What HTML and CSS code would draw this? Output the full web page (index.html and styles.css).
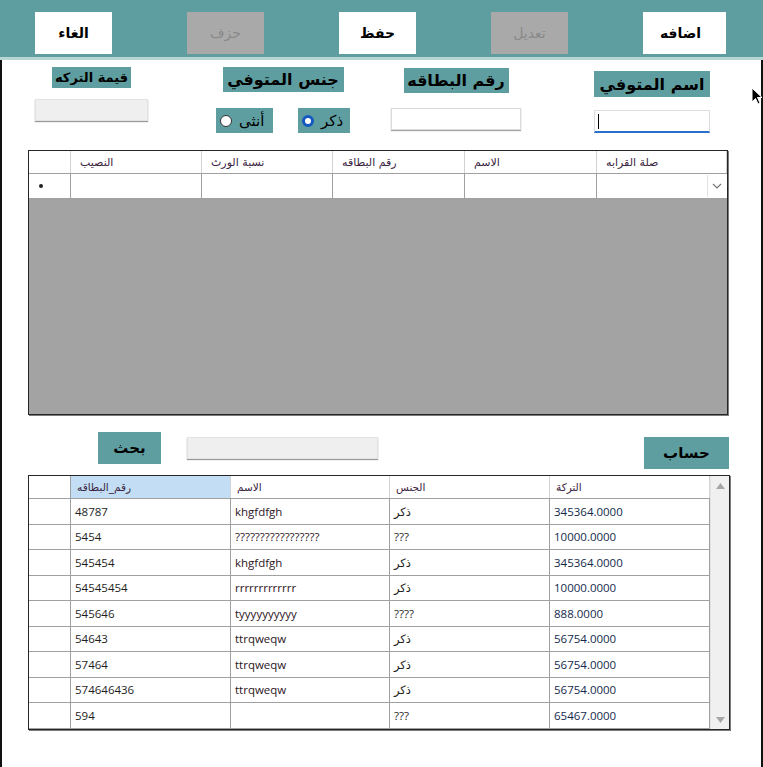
FILE: index.html
```html
<!DOCTYPE html>
<html lang="ar">
<head>
<meta charset="utf-8">
<title>التركة</title>
<link rel="stylesheet" href="styles.css">
</head>
<body>
<div class="window">
  <header class="toolbar">
    <button class="tb-btn">الغاء</button>
    <button class="tb-btn disabled">حزف</button>
    <button class="tb-btn">حفظ</button>
    <button class="tb-btn disabled">تعديل</button>
    <button class="tb-btn wide">اضافه</button>
  </header>

  <main class="content">
    <section class="form">
      <div class="field f-sum">
        <div class="lbl lbl-small">قيمة التركه</div>
        <div class="box box-grey"></div>
      </div>
      <div class="field f-gender">
        <div class="lbl lbl-gender">جنس المتوفي</div>
        <div class="radios">
          <div class="radio r-female"><span class="dot"></span><span>أنثى</span></div>
          <div class="radio r-male"><span class="dot checked"></span><span>ذكر</span></div>
        </div>
      </div>
      <div class="field f-card">
        <div class="lbl lbl-card">رقم البطاقه</div>
        <div class="box box-white"></div>
      </div>
      <div class="field f-name">
        <div class="lbl lbl-name">اسم المتوفي</div>
        <div class="box box-focus"><span class="caret"></span></div>
      </div>
    </section>

    <section class="ugrid">
      <div class="ug-row ug-head">
        <div class="ug-cell"></div>
        <div class="ug-cell">النصيب</div>
        <div class="ug-cell">نسبة الورث</div>
        <div class="ug-cell">رقم البطاقه</div>
        <div class="ug-cell">الاسم</div>
        <div class="ug-cell">صلة القرابه</div>
      </div>
      <div class="ug-row ug-new">
        <div class="ug-cell ug-rh"><span class="star"></span></div>
        <div class="ug-cell"></div>
        <div class="ug-cell"></div>
        <div class="ug-cell"></div>
        <div class="ug-cell"></div>
        <div class="ug-cell ug-combo">
          <span class="combo-btn">
            <svg width="10" height="6" viewBox="0 0 10 6"><polyline points="1,1 5,5 9,1" fill="none" stroke="#777" stroke-width="1.2"/></svg>
          </span>
        </div>
      </div>
    </section>

    <section class="search-row">
      <button class="teal-btn btn-search">بحث</button>
      <div class="box box-grey search-box"></div>
      <button class="teal-btn btn-calc">حساب</button>
    </section>

    <section class="lgrid">
      <div class="lg-table">
        <div class="lg-row lg-head">
          <div class="lg-cell lg-rh"></div>
          <div class="lg-cell sel">رقم_البطاقه</div>
          <div class="lg-cell">الاسم</div>
          <div class="lg-cell">الجنس</div>
          <div class="lg-cell">التركة</div>
        </div>
        <div class="lg-row"><div class="lg-cell lg-rh"></div><div class="lg-cell">48787</div><div class="lg-cell nm">khgfdfgh</div><div class="lg-cell">ذكر</div><div class="lg-cell num">345364.0000</div></div>
        <div class="lg-row"><div class="lg-cell lg-rh"></div><div class="lg-cell">5454</div><div class="lg-cell nm">?????????????????</div><div class="lg-cell">???</div><div class="lg-cell num">10000.0000</div></div>
        <div class="lg-row"><div class="lg-cell lg-rh"></div><div class="lg-cell">545454</div><div class="lg-cell nm">khgfdfgh</div><div class="lg-cell">ذكر</div><div class="lg-cell num">345364.0000</div></div>
        <div class="lg-row"><div class="lg-cell lg-rh"></div><div class="lg-cell">54545454</div><div class="lg-cell nm">rrrrrrrrrrrrr</div><div class="lg-cell">ذكر</div><div class="lg-cell num">10000.0000</div></div>
        <div class="lg-row"><div class="lg-cell lg-rh"></div><div class="lg-cell">545646</div><div class="lg-cell nm">tyyyyyyyyyy</div><div class="lg-cell">????</div><div class="lg-cell num">888.0000</div></div>
        <div class="lg-row"><div class="lg-cell lg-rh"></div><div class="lg-cell">54643</div><div class="lg-cell nm">ttrqweqw</div><div class="lg-cell">ذكر</div><div class="lg-cell num">56754.0000</div></div>
        <div class="lg-row"><div class="lg-cell lg-rh"></div><div class="lg-cell">57464</div><div class="lg-cell nm">ttrqweqw</div><div class="lg-cell">ذكر</div><div class="lg-cell num">56754.0000</div></div>
        <div class="lg-row"><div class="lg-cell lg-rh"></div><div class="lg-cell">574646436</div><div class="lg-cell nm">ttrqweqw</div><div class="lg-cell">ذكر</div><div class="lg-cell num">56754.0000</div></div>
        <div class="lg-row"><div class="lg-cell lg-rh"></div><div class="lg-cell">594</div><div class="lg-cell nm"></div><div class="lg-cell">???</div><div class="lg-cell num">65467.0000</div></div>
      </div>
      <div class="vscroll">
        <svg class="arr" width="9" height="6" viewBox="0 0 9 6"><polygon points="0,6 4.5,0 9,6" fill="#a6a6a6"/></svg>
        <svg class="arr" width="9" height="6" viewBox="0 0 9 6"><polygon points="0,0 4.5,6 9,0" fill="#a6a6a6"/></svg>
      </div>
    </section>
  </main>

  <svg class="mouse" width="12" height="18" viewBox="0 0 12 18">
    <polygon points="1,1 1,15 4.5,11.5 7,17 9,16 6.5,10.5 11,10.5" fill="#000" stroke="#fff" stroke-width="1"/>
  </svg>
</div>
</body>
</html>
```

FILE: styles.css
```css
* { box-sizing: border-box; }

html, body {
  margin: 0;
  padding: 0;
  background: #fff;
}

body {
  font-family: "Open Sans", "DejaVu Sans", sans-serif;
  color: #1a1a1a;
}

.window {
  position: relative;
  width: 763px;
  height: 767px;
  overflow: hidden;
  background: #fff;
}

/* ---------- toolbar ---------- */
.toolbar {
  height: 60px;
  background: #5f9ea0;
  border-bottom: 3px solid #b7d7d5;
  display: flex;
  align-items: flex-start;
  padding: 12px 0 0 35px;
  gap: 75px;
}

.tb-btn {
  width: 77px;
  height: 42px;
  border: none;
  background: #fff;
  font-family: "DejaVu Sans", sans-serif;
  font-weight: bold;
  font-size: 14px;
  color: #000;
  padding: 0;
}

.tb-btn.wide { width: 83px; padding-right: 8px; }

.tb-btn.disabled {
  background: #a9a9a9;
  color: #8a8a8a;
  font-weight: normal;
}

/* ---------- content frame ---------- */
.content {
  height: 707px;
  border-left: 2px solid #111;
  border-right: 2px solid #111;
  display: flex;
  flex-direction: column;
}

/* ---------- form ---------- */
.form {
  height: 90px;
  display: flex;
  padding-left: 33px;
}

.field {
  display: flex;
  flex-direction: column;
  align-items: center;
}

.lbl {
  background: #5f9ea0;
  color: #000;
  font-family: "DejaVu Sans", sans-serif;
  font-weight: bold;
  font-size: 16px;
  height: 25px;
  display: flex;
  align-items: center;
  justify-content: center;
}

.lbl-small { font-size: 13px; height: 21px; width: 79px; margin-top: 7px; }
.lbl-gender { width: 121px; margin-top: 7px; }
.lbl-card { width: 105px; margin-top: 8px; }
.lbl-name { width: 116px; margin-top: 11px; height: 26px; }

.box { height: 22px; }

.box-grey {
  background: #efefef;
  border: 1px solid #e2e2e2;
  box-shadow: 0 1px 1px #9a9a9a;
}

.box-white {
  background: #fff;
  border: 1px solid #dadada;
  box-shadow: 0 1px 1px #a8a8a8;
}

.box-focus {
  background: #fff;
  border: 1px solid #dcdcdc;
  border-bottom: 2px solid #2a6fc9;
  display: flex;
  align-items: center;
  padding-left: 3px;
}

.caret {
  width: 1px;
  height: 15px;
  background: #000;
}

.f-sum { width: 113px; }
.f-sum .box { width: 113px; margin-top: 11px; }

.f-gender { width: 134px; margin-left: 68px; }
.radios {
  display: flex;
  gap: 25px;
  margin-top: 16px;
  width: 134px;
}

.radio {
  background: #5f9ea0;
  height: 25px;
  display: flex;
  align-items: center;
  gap: 7px;
  padding-left: 4px;
  font-family: "DejaVu Sans", sans-serif;
  font-size: 15px;
  color: #000;
}

.r-female { width: 57px; }
.r-male { width: 52px; }

.dot {
  width: 12px;
  height: 12px;
  border-radius: 50%;
  background: #fff;
  border: 1px solid #333;
  flex: none;
}

.dot.checked {
  border: 3.5px solid #1457c0;
  background: #fff;
}

.f-card { width: 130px; margin-left: 41px; }
.f-card .box { width: 130px; margin-top: 15px; }

.f-name { width: 116px; margin-left: 73px; }
.f-name .box { width: 116px; margin-top: 13px; height: 23px; }

/* ---------- upper grid ---------- */
.ugrid {
  margin-left: 26px;
  width: 700px;
  height: 265px;
  background: #a3a3a3;
  border: 1px solid #262626;
  box-shadow: 1px 1px 0 #7a7a7a;
}

.ug-row {
  display: grid;
  grid-template-columns: 42px 131px 131px 132px 132px 1fr;
  background: #fff;
}

.ug-head {
  height: 23px;
  border-bottom: 1px solid #a0a0a0;
}

.ug-head .ug-cell {
  border-right: 1px solid #d2d2d2;
  font-family: "DejaVu Sans", sans-serif;
  font-size: 11px;
  color: #3a2440;
  padding-left: 9px;
  display: flex;
  align-items: center;
}

.ug-new {
  height: 25px;
  border-bottom: 1px solid #a0a0a0;
}

.ug-new .ug-cell {
  border-right: 1px solid #a0a0a0;
  display: flex;
  align-items: center;
}

.ug-rh { justify-content: flex-start; padding-left: 10px; }

.star {
  width: 4px;
  height: 4px;
  border-radius: 50%;
  background: #222;
}

.ug-combo {
  justify-content: flex-end;
  border-right: none !important;
  padding: 1px;
}

.combo-btn {
  width: 19px;
  height: 100%;
  border-left: 1px solid #e2e2e2;
  display: flex;
  align-items: center;
  justify-content: center;
}

/* ---------- search row ---------- */
.search-row {
  height: 37px;
  margin-top: 17px;
  display: flex;
  align-items: flex-start;
}

.teal-btn {
  background: #5f9ea0;
  border: none;
  font-family: "DejaVu Sans", sans-serif;
  font-weight: bold;
  color: #000;
  padding: 0;
}

.btn-search {
  margin-left: 96px;
  width: 63px;
  height: 32px;
  font-size: 15px;
}

.search-box {
  margin-left: 26px;
  margin-top: 5px;
  width: 191px;
}

.btn-calc {
  margin-left: 266px;
  margin-top: 5px;
  width: 85px;
  height: 32px;
  font-size: 15px;
}

/* ---------- lower grid ---------- */
.lgrid {
  margin-top: 6px;
  margin-left: 26px;
  width: 702px;
  height: 255px;
  border: 1px solid #262626;
  box-shadow: 1px 1px 0 #7a7a7a;
  display: flex;
  background: #fff;
}

.lg-table {
  width: 681px;
  display: flex;
  flex-direction: column;
}

.lg-row {
  display: grid;
  grid-template-columns: 42px 160px 159px 160px 160px;
  height: 25.5px;
  border-bottom: 1px solid #a0a0a0;
}

.lg-head {
  height: 23px;
  border-bottom: 1px solid #a0a0a0;
}

.lg-cell {
  border-right: 1px solid #a0a0a0;
  display: flex;
  align-items: center;
  padding-left: 4px;
  font-size: 11.5px;
  color: #1e1e1e;
  white-space: nowrap;
  overflow: hidden;
}

.lg-cell.nm { color: #2c1424; }
.lg-cell.num { color: #132a4c; }

.lg-head .lg-cell {
  border-right: 1px solid #d4d4d4;
  font-family: "DejaVu Sans", sans-serif;
  font-size: 10.5px;
  color: #3a2440;
  padding-left: 6px;
}

.lg-head .lg-cell.sel { background: #c3def4; }

.lg-row .lg-rh {
  border-right: 1px solid #a0a0a0;
}

.lg-row:not(.lg-head) .lg-rh {
  box-shadow: inset 0 -1px 0 #fff;
}

.vscroll {
  flex: 1;
  background: #f0f0f0;
  border-left: 1px solid #e4e4e4;
  display: flex;
  flex-direction: column;
  justify-content: space-between;
  align-items: center;
  padding: 7px 0 6px;
}

/* ---------- mouse pointer ---------- */
.mouse {
  position: absolute;
  left: 751px;
  top: 87px;
}
```
